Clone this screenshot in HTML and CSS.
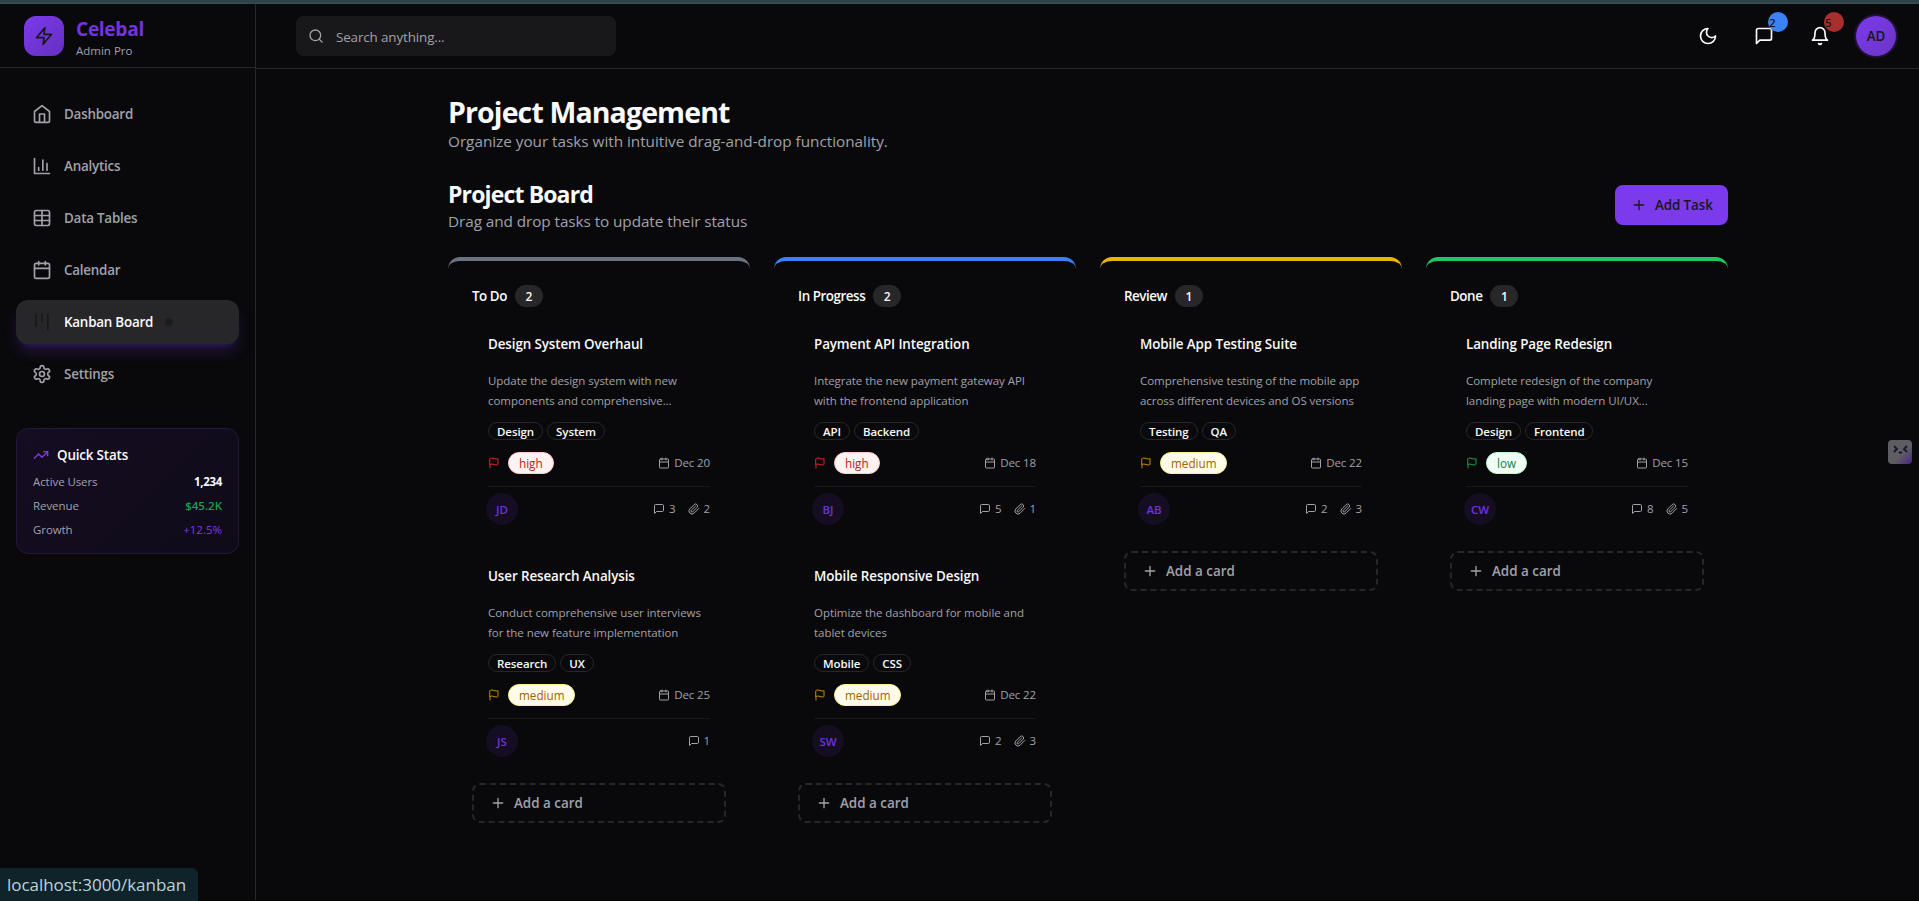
FILE: index.html
```html
<!DOCTYPE html>
<html lang="en">
<head>
<meta charset="utf-8">
<title>Celebal Admin Pro</title>
<link rel="stylesheet" href="styles.css">
</head>
<body>
<svg class="sprite" aria-hidden="true">
  <symbol id="zap" viewBox="0 0 24 24"><path d="M13 2 3 14h9l-1 8 10-12h-9l1-8z"/></symbol>
  <symbol id="home" viewBox="0 0 24 24"><path d="m3 9 9-7 9 7v11a2 2 0 0 1-2 2H5a2 2 0 0 1-2-2z"/><path d="M9 22V12h6v10"/></symbol>
  <symbol id="chart" viewBox="0 0 24 24"><path d="M3 3v18h18M18 17V9M13 17V5M8 17v-3"/></symbol>
  <symbol id="table" viewBox="0 0 24 24"><path d="M12 3v18M3 9h18M3 15h18"/><rect width="18" height="18" x="3" y="3" rx="2"/></symbol>
  <symbol id="calendar" viewBox="0 0 24 24"><rect width="18" height="18" x="3" y="4" rx="2"/><path d="M16 2v4M8 2v4M3 10h18"/></symbol>
  <symbol id="kanban" viewBox="0 0 24 24"><path d="M5 3v14M12 3v8M19 3v18"/></symbol>
  <symbol id="gear" viewBox="0 0 24 24"><path d="M12.22 2h-.44a2 2 0 0 0-2 2v.18a2 2 0 0 1-1 1.73l-.43.25a2 2 0 0 1-2 0l-.15-.08a2 2 0 0 0-2.73.73l-.22.38a2 2 0 0 0 .73 2.73l.15.1a2 2 0 0 1 1 1.72v.51a2 2 0 0 1-1 1.74l-.15.09a2 2 0 0 0-.73 2.73l.22.38a2 2 0 0 0 2.73.73l.15-.08a2 2 0 0 1 2 0l.43.25a2 2 0 0 1 1 1.73V20a2 2 0 0 0 2 2h.44a2 2 0 0 0 2-2v-.18a2 2 0 0 1 1-1.73l.43-.25a2 2 0 0 1 2 0l.15.08a2 2 0 0 0 2.73-.73l.22-.39a2 2 0 0 0-.73-2.73l-.15-.08a2 2 0 0 1-1-1.74v-.5a2 2 0 0 1 1-1.74l.15-.09a2 2 0 0 0 .73-2.73l-.22-.38a2 2 0 0 0-2.73-.73l-.15.08a2 2 0 0 1-2 0l-.43-.25a2 2 0 0 1-1-1.73V4a2 2 0 0 0-2-2z"/><circle cx="12" cy="12" r="3"/></symbol>
  <symbol id="trend" viewBox="0 0 24 24"><path d="m22 7-8.5 8.5-5-5L2 17"/><path d="M16 7h6v6"/></symbol>
  <symbol id="search" viewBox="0 0 24 24"><circle cx="11" cy="11" r="8"/><path d="m21 21-4.3-4.3"/></symbol>
  <symbol id="moon" viewBox="0 0 24 24"><path d="M12 3a6 6 0 0 0 9 9 9 9 0 1 1-9-9Z"/></symbol>
  <symbol id="chat" viewBox="0 0 24 24"><path d="M21 15a2 2 0 0 1-2 2H7l-4 4V5a2 2 0 0 1 2-2h14a2 2 0 0 1 2 2z"/></symbol>
  <symbol id="bell" viewBox="0 0 24 24"><path d="M6 8a6 6 0 0 1 12 0c0 7 3 9 3 9H3s3-2 3-9"/><path d="M10.3 21a1.94 1.94 0 0 0 3.4 0"/></symbol>
  <symbol id="plus" viewBox="0 0 24 24"><path d="M5 12h14M12 5v14"/></symbol>
  <symbol id="flag" viewBox="0 0 24 24"><path d="M4 15s1-1 4-1 5 2 8 2 4-1 4-1V3s-1 1-4 1-5-2-8-2-4 1-4 1zM4 22v-7"/></symbol>
  <symbol id="clip" viewBox="0 0 24 24"><path d="m21.44 11.05-9.19 9.19a6 6 0 0 1-8.49-8.49l8.57-8.57A4 4 0 1 1 18 8.84l-8.59 8.57a2 2 0 0 1-2.83-2.83l8.49-8.48"/></symbol>
</svg>

<div class="strip"></div>
<div class="app">
  <aside class="sidebar">
    <div class="brand">
      <div class="logo"><svg class="icon i20"><use href="#zap"/></svg></div>
      <div class="brand-text"><div class="brand-name">Celebal</div><div class="brand-sub">Admin Pro</div></div>
    </div>
    <nav class="nav">
      <a class="nav-item"><svg class="icon i20"><use href="#home"/></svg><span>Dashboard</span></a>
      <a class="nav-item"><svg class="icon i20"><use href="#chart"/></svg><span>Analytics</span></a>
      <a class="nav-item"><svg class="icon i20"><use href="#table"/></svg><span>Data Tables</span></a>
      <a class="nav-item"><svg class="icon i20"><use href="#calendar"/></svg><span>Calendar</span></a>
      <a class="nav-item active"><svg class="icon i20"><use href="#kanban"/></svg><span>Kanban Board</span><i class="dot"></i></a>
      <a class="nav-item"><svg class="icon i20"><use href="#gear"/></svg><span>Settings</span></a>
    </nav>
    <section class="stats">
      <h3 class="stats-title"><svg class="icon i16"><use href="#trend"/></svg><span>Quick Stats</span></h3>
      <div class="stat"><span>Active Users</span><span class="stat-val">1,234</span></div>
      <div class="stat"><span>Revenue</span><span class="stat-val green">$45.2K</span></div>
      <div class="stat"><span>Growth</span><span class="stat-val purple">+12.5%</span></div>
    </section>
  </aside>

  <div class="page">
    <header class="topbar">
      <div class="search"><svg class="icon i16"><use href="#search"/></svg><span>Search anything...</span></div>
      <div class="actions">
        <div class="action"><svg class="icon i20"><use href="#moon"/></svg></div>
        <div class="action"><svg class="icon i20"><use href="#chat"/></svg><b class="badge blue">2</b></div>
        <div class="action"><svg class="icon i20"><use href="#bell"/></svg><b class="badge red">5</b></div>
        <div class="user"><span>AD</span></div>
      </div>
    </header>

    <main class="content">
      <h1 class="title">Project Management</h1>
      <p class="lead">Organize your tasks with intuitive drag-and-drop functionality.</p>
      <div class="board-head">
        <div>
          <h2 class="subtitle">Project Board</h2>
          <p class="lead lead-sm">Drag and drop tasks to update their status</p>
        </div>
        <button class="add-task"><svg class="icon i16"><use href="#plus"/></svg><span>Add Task</span></button>
      </div>

      <div class="board">
        <section class="column gray">
          <div class="col-head"><h3>To Do</h3><span class="count">2</span></div>
          <article class="card">
            <h4>Design System Overhaul</h4>
            <p class="desc">Update the design system with new<br>components and comprehensive...</p>
            <div class="tags"><span>Design</span><span>System</span></div>
            <div class="meta high"><svg class="icon i12"><use href="#flag"/></svg><span class="prio">high</span><span class="date"><svg class="icon i12"><use href="#calendar"/></svg>Dec 20</span></div>
            <div class="foot"><span class="avatar">JD</span><span class="num"><svg class="icon i12"><use href="#chat"/></svg>3</span><span class="num"><svg class="icon i12"><use href="#clip"/></svg>2</span></div>
          </article>
          <article class="card">
            <h4>User Research Analysis</h4>
            <p class="desc">Conduct comprehensive user interviews<br>for the new feature implementation</p>
            <div class="tags"><span>Research</span><span>UX</span></div>
            <div class="meta medium"><svg class="icon i12"><use href="#flag"/></svg><span class="prio">medium</span><span class="date"><svg class="icon i12"><use href="#calendar"/></svg>Dec 25</span></div>
            <div class="foot"><span class="avatar">JS</span><span class="num"><svg class="icon i12"><use href="#chat"/></svg>1</span></div>
          </article>
          <button class="add-card"><svg class="icon i16"><use href="#plus"/></svg><span>Add a card</span></button>
        </section>

        <section class="column azure">
          <div class="col-head"><h3>In Progress</h3><span class="count">2</span></div>
          <article class="card">
            <h4>Payment API Integration</h4>
            <p class="desc">Integrate the new payment gateway API<br>with the frontend application</p>
            <div class="tags"><span>API</span><span>Backend</span></div>
            <div class="meta high"><svg class="icon i12"><use href="#flag"/></svg><span class="prio">high</span><span class="date"><svg class="icon i12"><use href="#calendar"/></svg>Dec 18</span></div>
            <div class="foot"><span class="avatar">BJ</span><span class="num"><svg class="icon i12"><use href="#chat"/></svg>5</span><span class="num"><svg class="icon i12"><use href="#clip"/></svg>1</span></div>
          </article>
          <article class="card">
            <h4>Mobile Responsive Design</h4>
            <p class="desc">Optimize the dashboard for mobile and<br>tablet devices</p>
            <div class="tags"><span>Mobile</span><span>CSS</span></div>
            <div class="meta medium"><svg class="icon i12"><use href="#flag"/></svg><span class="prio">medium</span><span class="date"><svg class="icon i12"><use href="#calendar"/></svg>Dec 22</span></div>
            <div class="foot"><span class="avatar">SW</span><span class="num"><svg class="icon i12"><use href="#chat"/></svg>2</span><span class="num"><svg class="icon i12"><use href="#clip"/></svg>3</span></div>
          </article>
          <button class="add-card"><svg class="icon i16"><use href="#plus"/></svg><span>Add a card</span></button>
        </section>

        <section class="column amber">
          <div class="col-head"><h3>Review</h3><span class="count">1</span></div>
          <article class="card">
            <h4>Mobile App Testing Suite</h4>
            <p class="desc">Comprehensive testing of the mobile app<br>across different devices and OS versions</p>
            <div class="tags"><span>Testing</span><span>QA</span></div>
            <div class="meta medium"><svg class="icon i12"><use href="#flag"/></svg><span class="prio">medium</span><span class="date"><svg class="icon i12"><use href="#calendar"/></svg>Dec 22</span></div>
            <div class="foot"><span class="avatar">AB</span><span class="num"><svg class="icon i12"><use href="#chat"/></svg>2</span><span class="num"><svg class="icon i12"><use href="#clip"/></svg>3</span></div>
          </article>
          <button class="add-card"><svg class="icon i16"><use href="#plus"/></svg><span>Add a card</span></button>
        </section>

        <section class="column lime">
          <div class="col-head"><h3>Done</h3><span class="count">1</span></div>
          <article class="card">
            <h4>Landing Page Redesign</h4>
            <p class="desc">Complete redesign of the company<br>landing page with modern UI/UX...</p>
            <div class="tags"><span>Design</span><span>Frontend</span></div>
            <div class="meta low"><svg class="icon i12"><use href="#flag"/></svg><span class="prio">low</span><span class="date"><svg class="icon i12"><use href="#calendar"/></svg>Dec 15</span></div>
            <div class="foot"><span class="avatar">CW</span><span class="num"><svg class="icon i12"><use href="#chat"/></svg>8</span><span class="num"><svg class="icon i12"><use href="#clip"/></svg>5</span></div>
          </article>
          <button class="add-card"><svg class="icon i16"><use href="#plus"/></svg><span>Add a card</span></button>
        </section>
      </div>
    </main>
  </div>
</div>

<div class="link-status">localhost:3000/kanban</div>
<div class="widget"><svg viewBox="0 0 24 24"><path d="m6 6 3 3-3 3M19 6l-3 3 3 3M11 12q1.500 1.500 3 0"/></svg></div>
</body>
</html>
```
FILE: styles.css
```css
* { box-sizing: border-box; margin: 0; padding: 0; }
body { height: 901px; overflow: hidden; background: #09090b; color: #fafafa; font-family: "Open Sans", "Noto Sans", sans-serif; font-size: 14px; line-height: 20px; border-bottom: 1px solid #000; }
button { font: inherit; border: 0; text-align: left; white-space: nowrap; }
.sprite { position: absolute; width: 0; height: 0; }
.icon { flex: none; display: block; fill: none; stroke: currentColor; stroke-width: 2; stroke-linecap: round; stroke-linejoin: round; }
.i20 { width: 20px; height: 20px; }
.i16 { width: 16px; height: 16px; }
.i12 { width: 12px; height: 12px; }

.strip { height: 4px; background: #2f434b; border-bottom: 1px solid #3b4b50; }
.app { display: flex; height: 896px; }

.sidebar { width: 256px; border-right: 1px solid #27272a; }
.brand { display: flex; align-items: center; gap: 12px; height: 64px; padding: 0 24px; border-bottom: 1px solid #27272a; }
.logo { display: grid; place-items: center; width: 40px; height: 40px; border-radius: 12px; background: linear-gradient(135deg, #7c3aed, #6330be); color: #18181b; }
.brand-text { padding-top: 2px; }
.brand-name { font-size: 19.200px; line-height: 28px; font-weight: 700; letter-spacing: -.35px; color: #7434dd; }
.brand-sub { font-size: 11.500px; line-height: 16px; color: #a1a1aa; }
.nav { display: flex; flex-direction: column; gap: 8px; padding: 24px 16px 0; }
.nav-item { display: flex; align-items: center; gap: 12px; height: 44px; padding: 0 16px; border-radius: 12px; font-size: 13.400px; font-weight: 600; letter-spacing: -.22px; color: #a1a1aa; }
.nav-item.active { background: #27272a; color: #fafafa; box-shadow: 0 10px 15px -3px rgba(124, 58, 237, .25), 0 4px 6px -4px rgba(124, 58, 237, .25); }
.active .icon { color: #18181b; }
.dot { width: 8px; height: 8px; border-radius: 50%; background: #1c1c1f; }
.stats { margin: 32px 16px 0; padding: 16px; border: 1px solid #25153f; border-radius: 12px; background: linear-gradient(135deg, #150d22, #0f0b18); }
.stats-title { display: flex; align-items: center; gap: 8px; margin-bottom: 8px; font-size: 13.400px; font-weight: 600; letter-spacing: -.16px; }
.stats-title .icon { color: #7c3aed; }
.stat { display: flex; justify-content: space-between; padding-top: 1px; margin-bottom: -1px; font-size: 11.500px; line-height: 16px; letter-spacing: -.08px; color: #a1a1aa; }
.stat + .stat { margin-top: 8px; }
.stat-val { font-weight: 700; letter-spacing: -.3px; color: #fafafa; }
.stat-val.green { font-weight: 600; letter-spacing: 0; color: #16a34a; }
.stat-val.purple { font-weight: 500; letter-spacing: 0; color: #7c3aed; }

.page { flex: 1; }
.topbar { display: flex; align-items: center; justify-content: space-between; height: 65px; padding: 0 23px 0 40px; border-bottom: 1px solid #27272a; }
.search { display: flex; align-items: center; gap: 12px; width: 320px; height: 40px; padding: 0 12px; border-radius: 8px; background: #18181a; color: #a1a1aa; font-size: 13.400px; letter-spacing: -.12px; }
.search span { padding-top: 1px; }
.actions { display: flex; gap: 16px; }
.action { position: relative; display: grid; place-items: center; width: 40px; height: 40px; }
.badge { position: absolute; top: -4px; right: -4px; width: 20px; height: 20px; padding-left: 1px; border-radius: 50%; font-size: 11.500px; font-weight: 600; line-height: 21px; color: #18181b; }
.badge.blue { background: #3b82f6; }
.badge.red { background: #a92f2f; }
.user { display: grid; place-items: center; width: 40px; height: 40px; border-radius: 50%; background: linear-gradient(135deg, #7c3aed, #6a35c4); box-shadow: 0 0 0 2px #201236; color: #18181b; font-size: 13.400px; font-weight: 600; }

.content { width: 1280px; margin: 24px 0 0 192px; }
.title { padding-top: 1px; margin-bottom: -1px; font-size: 28.500px; line-height: 36px; font-weight: 700; letter-spacing: -.88px; }
.lead { font-size: 15.300px; line-height: 24px; letter-spacing: -.02px; color: #a1a1aa; }
.lead-sm { letter-spacing: -.07px; }
.board-head { display: flex; align-items: center; justify-content: space-between; margin: 24px 0; }
.subtitle { padding-top: 1px; margin-bottom: -1px; font-size: 23px; line-height: 32px; font-weight: 700; letter-spacing: -.86px; }
.add-task { display: flex; align-items: center; gap: 8px; width: 113px; height: 40px; padding: 0 0 0 16px; border-radius: 8px; background: #7c3aed; color: #18181b; font-size: 13.400px; font-weight: 600; letter-spacing: -.1px; }

.board { display: grid; grid-template-columns: repeat(4, 1fr); gap: 24px; align-items: start; }
.column { padding: 24px; border-top: 4px solid; border-radius: 12px; }
.gray { border-color: #6b7280; }
.azure { border-color: #3b82f6; }
.amber { border-color: #eab308; }
.lime { border-color: #22c55e; }
.col-head { display: flex; align-items: center; gap: 8px; height: 22px; margin-bottom: 16px; }
.col-head h3 { font-size: 13.400px; font-weight: 600; letter-spacing: -.45px; }
.count { padding: 0 10.500px; border-radius: 11px; background: #27272a; font-size: 12px; line-height: 23px; height: 22px; font-weight: 600; }
.card { height: 216px; margin-bottom: 16px; padding: 13px 16px 0; }
.card h4 { font-size: 13.400px; line-height: 17.500px; font-weight: 600; letter-spacing: -.1px; }
.desc { margin-top: 17px; font-size: 11.500px; line-height: 20px; letter-spacing: -.05px; color: #a1a1aa; }
.tags { display: flex; gap: 4px; margin-top: 11px; }
.tags span { height: 18px; padding: 0 8px; border: 1px solid #27272a; border-radius: 9px; font-size: 11.500px; line-height: 17px; font-weight: 600; letter-spacing: -.08px; }
.meta { display: flex; align-items: center; height: 22px; margin-top: 12px; }
.prio { margin-left: 8px; padding: 0 10px; border: 1px solid; border-radius: 11px; font-size: 11.700px; line-height: 20px; font-weight: 500; }
.high { color: #dc2626; }
.high .prio { background: #fef2f2; border-color: #fecaca; color: #b91c1c; }
.medium { color: #ca8a04; }
.medium .prio { background: #fefce8; border-color: #fef08a; color: #a16207; }
.low { color: #16a34a; }
.low .prio { background: #f0fdf4; border-color: #bbf7d0; color: #15803d; }
.date, .num { display: flex; align-items: center; gap: 4px; font-size: 11.500px; line-height: 17px; letter-spacing: -.1px; color: #a1a1aa; }
.date { margin-left: auto; }
.foot { display: flex; align-items: center; gap: 12px; height: 45px; margin-top: 12px; border-top: 1px solid #18181b; }
.avatar { width: 32px; height: 32px; margin: 0 auto 0 -2px; border-radius: 50%; background: #150e22; color: #6d33e0; font-size: 11.500px; line-height: 33px; text-align: center; font-weight: 600; }
.add-card { display: flex; align-items: center; gap: 8px; width: 100%; height: 40px; margin-top: -4px; padding: 0 16px; border: 2px dashed #27272a; border-radius: 8px; background: transparent; color: #a1a1aa; font-size: 13.400px; font-weight: 600; }

.link-status { position: absolute; left: 0; bottom: 0; width: 198px; height: 33px; padding-left: 7px; border-top-right-radius: 6px; background: #0f232b; color: #b9d4de; font-size: 17px; line-height: 33px; letter-spacing: -.04px; }
.widget { position: absolute; left: 1888px; top: 440px; width: 24px; height: 24px; border-radius: 4px; background: linear-gradient(135deg, #5d5d63 60%, #4a2287); }
.widget svg { display: block; fill: none; stroke: #1b1b2a; stroke-width: 2; }
```
